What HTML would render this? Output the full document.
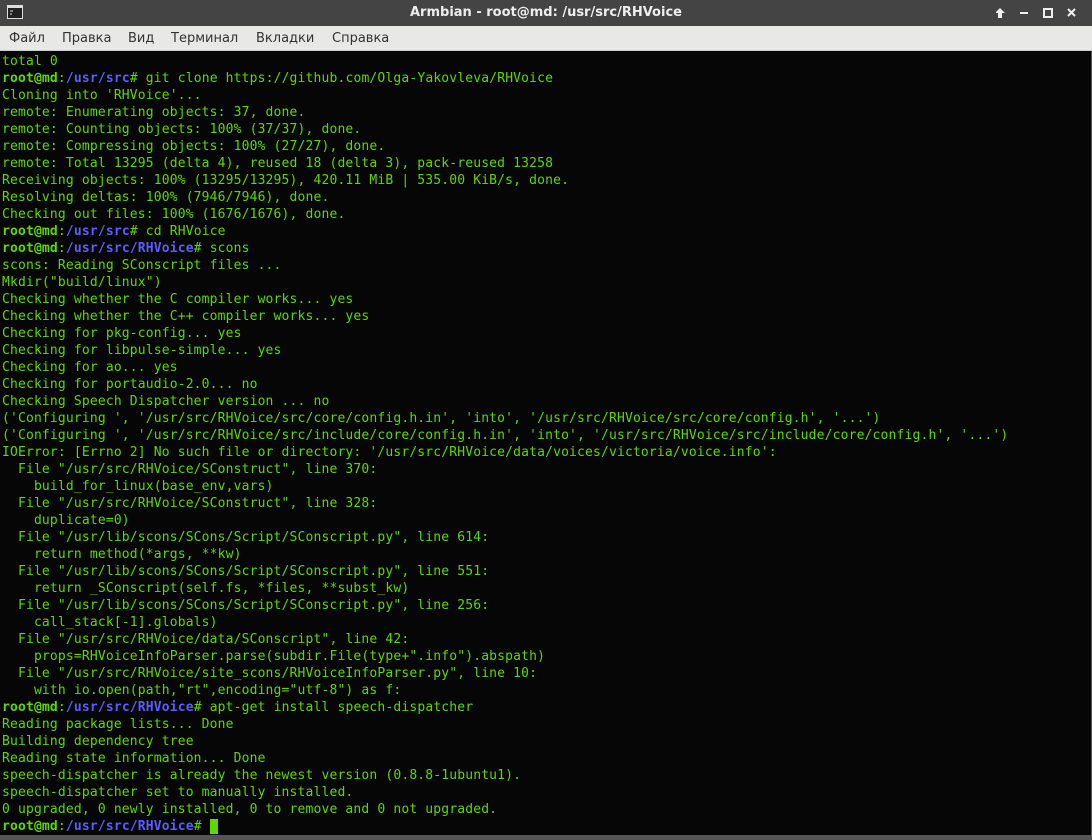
<!DOCTYPE html>
<html><head><meta charset="utf-8"><style>
body{margin:0;width:1092px;height:840px;overflow:hidden;background:#060606;position:relative;font-family:"DejaVu Sans","Liberation Sans",sans-serif}
#tb{position:absolute;left:0;top:0;width:1092px;height:26px;background:#444}
#tb .t{position:absolute;left:0;right:0;top:5px;text-align:center;color:#eee;font-weight:bold;font-size:13px}
#mb{position:absolute;left:0;top:26px;width:1092px;height:24px;background:#e8e8e6;border-bottom:1px solid #ccc}
#mb span{position:absolute;top:5px;font-size:13px;color:#333}
#term{position:absolute;left:2px;top:53px;font-family:"DejaVu Sans Mono","Liberation Mono",monospace;font-size:13px;letter-spacing:0.16px;line-height:17px;color:#5fd700;white-space:pre}
b{font-weight:bold;color:#5fd700}
i{font-style:normal;font-weight:bold;color:#5c5cff}
#bot{position:absolute;left:0;top:835px;width:1092px;height:5px;background:#555}
#rs{position:absolute;left:1091px;top:51px;width:1px;height:789px;background:#555}
</style></head><body>
<div id="tb">
<svg style="position:absolute;left:7px;top:5px" width="16" height="14"><rect x="0.5" y="0.5" width="15" height="13" fill="#222" stroke="#ddd"/><rect x="1" y="1" width="14" height="2" fill="#ddd"/><path d="M3 6h3M3 9h2" stroke="#ddd"/></svg>
<div class="t">Armbian - root@md: /usr/src/RHVoice</div>
<svg style="position:absolute;left:996px;top:7px" width="84" height="12" fill="#eee"><path d="M4 1l5 5h-3v5h-4v-5h-3z"/><rect x="24" y="5" width="8" height="2"/><rect x="48" y="2" width="8" height="8" fill="none" stroke="#eee" stroke-width="2"/><path d="M72 2l7 7M79 2l-7 7" stroke="#eee" stroke-width="2"/></svg>
</div>
<div id="mb"><span style="left:9px">Файл</span><span style="left:62px">Правка</span><span style="left:128px">Вид</span><span style="left:171px">Терминал</span><span style="left:256px">Вкладки</span><span style="left:332px">Справка</span></div>
<div id="term">total 0
<b>root@md</b>:<i>/usr/src</i># git clone https://github.com/Olga-Yakovleva/RHVoice
Cloning into 'RHVoice'...
remote: Enumerating objects: 37, done.
remote: Counting objects: 100% (37/37), done.
remote: Compressing objects: 100% (27/27), done.
remote: Total 13295 (delta 4), reused 18 (delta 3), pack-reused 13258
Receiving objects: 100% (13295/13295), 420.11 MiB | 535.00 KiB/s, done.
Resolving deltas: 100% (7946/7946), done.
Checking out files: 100% (1676/1676), done.
<b>root@md</b>:<i>/usr/src</i># cd RHVoice
<b>root@md</b>:<i>/usr/src/RHVoice</i># scons
scons: Reading SConscript files ...
Mkdir("build/linux")
Checking whether the C compiler works... yes
Checking whether the C++ compiler works... yes
Checking for pkg-config... yes
Checking for libpulse-simple... yes
Checking for ao... yes
Checking for portaudio-2.0... no
Checking Speech Dispatcher version ... no
('Configuring ', '/usr/src/RHVoice/src/core/config.h.in', 'into', '/usr/src/RHVoice/src/core/config.h', '...')
('Configuring ', '/usr/src/RHVoice/src/include/core/config.h.in', 'into', '/usr/src/RHVoice/src/include/core/config.h', '...')
IOError: [Errno 2] No such file or directory: '/usr/src/RHVoice/data/voices/victoria/voice.info':
  File "/usr/src/RHVoice/SConstruct", line 370:
    build_for_linux(base_env,vars)
  File "/usr/src/RHVoice/SConstruct", line 328:
    duplicate=0)
  File "/usr/lib/scons/SCons/Script/SConscript.py", line 614:
    return method(*args, **kw)
  File "/usr/lib/scons/SCons/Script/SConscript.py", line 551:
    return _SConscript(self.fs, *files, **subst_kw)
  File "/usr/lib/scons/SCons/Script/SConscript.py", line 256:
    call_stack[-1].globals)
  File "/usr/src/RHVoice/data/SConscript", line 42:
    props=RHVoiceInfoParser.parse(subdir.File(type+".info").abspath)
  File "/usr/src/RHVoice/site_scons/RHVoiceInfoParser.py", line 10:
    with io.open(path,"rt",encoding="utf-8") as f:
<b>root@md</b>:<i>/usr/src/RHVoice</i># apt-get install speech-dispatcher
Reading package lists... Done
Building dependency tree
Reading state information... Done
speech-dispatcher is already the newest version (0.8.8-1ubuntu1).
speech-dispatcher set to manually installed.
0 upgraded, 0 newly installed, 0 to remove and 0 not upgraded.
<b>root@md</b>:<i>/usr/src/RHVoice</i># <span style="background:#5fd700"> </span></div>
<div id="rs"></div><div id="bot"></div>
</body></html>
